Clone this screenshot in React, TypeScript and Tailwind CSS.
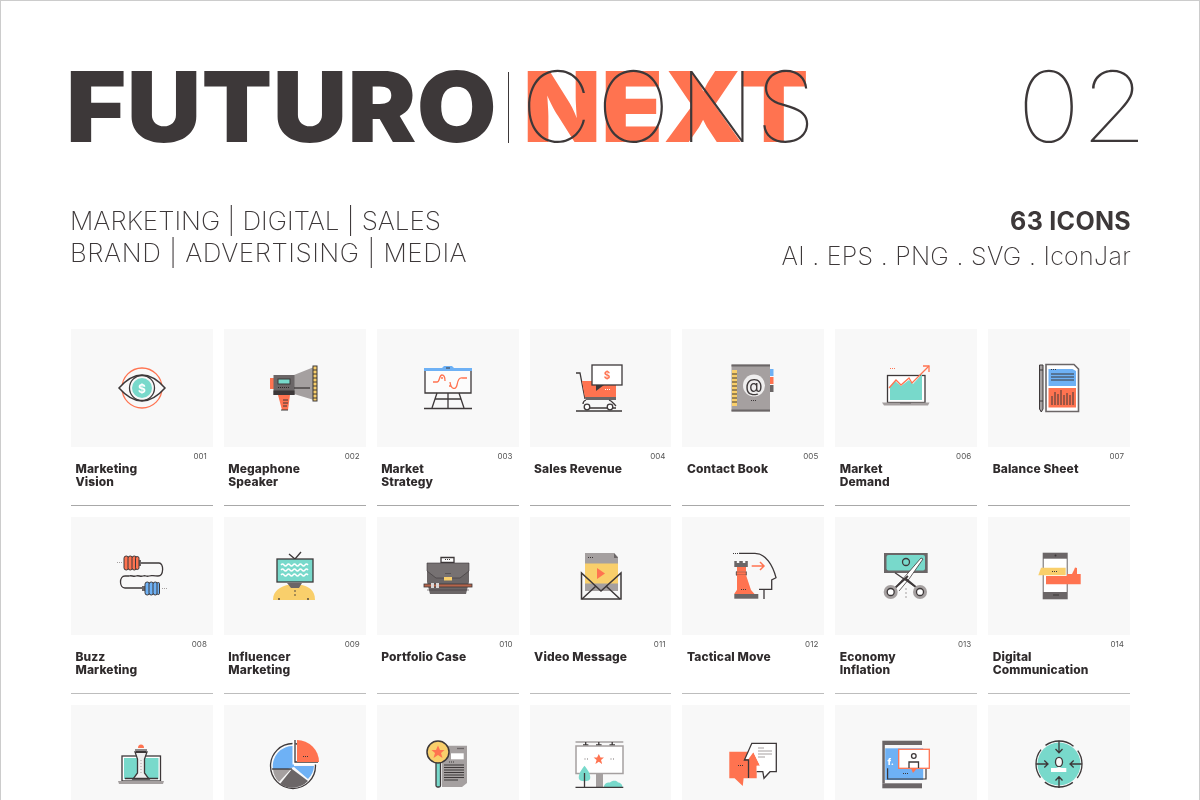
import React from "react";

const D = "#3d3839", O = "#ff7350", T = "#78d9cb", B = "#6eb1f5", Y = "#f9cf6b", G = "#a5a0a0", M = "#6b6667", W = "#ffffff";

const Dots = ({ x, y, c = D }: { x: number; y: number; c?: string }) => (
  <g fill={c}>
    <rect x={x} y={y} width="1" height="1" />
    <rect x={x + 2} y={y} width="1" height="1" />
    <rect x={x + 4} y={y} width="1" height="1" />
  </g>
);

const S = ({ children }: { children: React.ReactNode }) => (
  <svg width="64" height="64" viewBox="0 0 64 64" fill="none" stroke="none" strokeWidth="1.3">
    {children}
  </svg>
);

const icons: React.ReactNode[] = [
  // 1 eye
  <S key="1">
    <circle cx="32" cy="32" r="20" stroke={O} />
    <path d="M9 32Q32 6 55 32Q32 58 9 32Z" stroke={D} strokeWidth="1.5" fill="#f8f8f8" />
    <circle cx="32" cy="32" r="12.5" stroke={D} />
    <circle cx="32" cy="32" r="10" fill={T} />
    <text x="32" y="36.5" textAnchor="middle" fontSize="12" fontWeight="700" fontFamily="Inter, sans-serif" fill={W}>$</text>
  </S>,
  // 2 megaphone
  <S key="2">
    <rect x="7" y="22" width="4" height="11" fill={O} />
    <path d="M15 39h12l-2 15h-6z" fill={O} />
    <path d="M20 44h5M20 47h5M20 50h4M18 54h7" stroke={D} strokeWidth="1" />
    <path d="M31 19L51 11V44L31 38Z" fill={G} />
    <rect x="10.5" y="19" width="21" height="20" fill={M} />
    <rect x="10.5" y="34.5" width="21" height="4.5" fill={D} />
    <rect x="15" y="23" width="12" height="5" fill={T} stroke={D} strokeWidth="1" />
    <Dots x={15} y={31} c="#2c2829" />
    <Dots x={21} y={31} c="#2c2829" />
    <path d="M31 32H47" stroke={D} />
    <rect x="50" y="10" width="4" height="35" fill={Y} stroke={D} strokeWidth="1" />
    <path d="M50 14h4M50 18h4M50 22h4M50 26h4M50 30h4M50 34h4M50 38h4M50 42h4" stroke={D} strokeWidth="1" />
  </S>,
  // 3 strategy
  <S key="3">
    <path d="M26 12l2-2h8l2 2z" fill={B} />
    <rect x="8" y="12" width="48" height="3" fill={B} />
    <rect x="30" y="11.5" width="4" height="1" fill={D} />
    <path d="M9 15V37H55V15" stroke={D} fill="#fcfcfc" />
    <path d="M17 26h4c3 0 2-7 5-7s3 3 3 6" stroke={O} />
    <path d="M34 26c1 8 6 8 7 3s2-8 6-7h4" stroke={O} />
    <circle cx="26" cy="22" r="1" fill={O} />
    <circle cx="34" cy="30" r="1" fill={O} />
    <path d="M21 37L16 52M43 37L48 52M32 37V52M19 43H45" stroke={D} />
    <path d="M8 52.5H56" stroke={D} />
  </S>,
  // 4 cart
  <S key="4">
    <path d="M8 17h4l5 26" stroke={D} />
    <path d="M14 25h34v17H17z" fill={O} />
    <path d="M17 41h31v3H18z" fill={M} />
    <rect x="24" y="9" width="30" height="20" fill={W} stroke={D} />
    <path d="M28 29h8l-8 6z" fill={D} />
    <text x="39" y="22.5" textAnchor="middle" fontSize="10" fontWeight="700" fontFamily="Inter, sans-serif" fill={O}>$</text>
    <Dots x={37} y={33} c={W} />
    <path d="M18 44c-3 1-3 4-3 4M19 52H48M41 44c3 1 4 3 7 6" stroke={D} />
    <circle cx="19" cy="51" r="2.8" fill={W} stroke={D} />
    <circle cx="42" cy="51" r="2.8" fill={W} stroke={D} />
    <path d="M8 55H54" stroke={D} />
  </S>,
  // 5 contact book
  <S key="5">
    <rect x="49" y="13" width="3.5" height="7" fill={B} />
    <rect x="49" y="21" width="3.5" height="7" fill={O} />
    <rect x="49" y="29" width="3.5" height="7" fill={M} />
    <rect x="10.5" y="8.5" width="38.5" height="47" fill={G} />
    <path d="M10.5 9.5H49M10.5 54.5H49" stroke={M} strokeWidth="2" />
    <rect x="11" y="14" width="5" height="36" fill={Y} />
    <path d="M11 18h5M11 22h5M11 26h5M11 30h5M11 34h5M11 38h5M11 42h5M11 46h5" stroke={D} strokeWidth="1" />
    <circle cx="33" cy="29.5" r="11" fill="#efeeee" />
    <text x="33" y="36" textAnchor="middle" fontSize="18" fontWeight="400" fontFamily="Inter, sans-serif" fill={D}>@</text>
    <Dots x={30} y={44} />
  </S>,
  // 6 laptop demand
  <S key="6">
    <rect x="13.5" y="19.5" width="37.5" height="27" fill={W} stroke={D} />
    <path d="M16 44V31L21 25L27 30L35 24L39 28L48 18V44Z" fill={T} />
    <path d="M15 32L22 24L27 29L35 22L38 27L55 10" stroke={O} />
    <path d="M49 10H55V16" stroke={O} />
    <Dots x={16} y={12} c={O} />
    <path d="M8 46.5H55.5L54 49.5H10Z" fill={G} />
    <rect x="26" y="46" width="11" height="1.5" fill={M} />
  </S>,
  // 7 balance sheet
  <S key="7">
    <path d="M12.5 9h3.5v44l-1.7 3-1.8-3z" fill={G} stroke={D} strokeWidth="1" />
    <path d="M12.5 14h3.5M12.5 45h3.5" stroke={D} strokeWidth="1" />
    <path d="M19 8.5H47L51.5 13V55.5H19Z" stroke={M} strokeWidth="1.6" fill={W} />
    <path d="M21.5 13H45.5L49 15V30H21.5Z" fill={B} />
    <rect x="21.5" y="32" width="27.5" height="19.5" fill={O} />
    <Dots x={24} y={13} />
    <path d="M24 18H47M24 21H47M24 24H47" stroke={D} strokeWidth="1" />
    <path d="M25 49V40M28 49V36M31 49V38M34 49V34M37 49V39M40 49V37M43 49V39M46 49V36" stroke={D} strokeWidth="1" />
  </S>,
  // 8 buzz
  <S key="8">
    <path d="M31 19H49C54 19 54 32 48 32C42 32 42 31 39 32C36 33 36 31 33 32C30 33 29 31 26 32C23 33 22 31 19 32H15C9 32 9 44 15 44H32" stroke={D} />
    <path d="M27 16h4v6h-4z" fill={M} />
    <g fill={O} stroke={D} strokeWidth="1">
      <rect x="14" y="12" width="4.5" height="14" rx="2.2" />
      <rect x="18" y="12" width="4.5" height="14" rx="2.2" />
      <rect x="22" y="12" width="4.5" height="14" rx="2.2" />
      <rect x="25.5" y="12.5" width="3.5" height="13" rx="1.7" />
    </g>
    <path d="M32 42h4v5h-4z" fill={M} />
    <g fill={B} stroke={D} strokeWidth="1">
      <rect x="35" y="38" width="4.5" height="13" rx="2.2" />
      <rect x="39" y="38" width="4.5" height="13" rx="2.2" />
      <rect x="43" y="38" width="4.5" height="13" rx="2.2" />
      <rect x="47" y="38.5" width="2.5" height="12" rx="1.2" />
    </g>
    <Dots x={7} y={18} c={G} />
    <Dots x={52} y={44} c={G} />
  </S>,
  // 9 influencer
  <S key="9">
    <path d="M10 56C10 46 18 43 24 41H39C46 43 52 46 52 56Z" fill={Y} />
    <path d="M24 39H39L36 44H28Z" fill={M} />
    <path d="M16 54V56M45 54V56" stroke={D} />
    <circle cx="32" cy="47" r=".8" fill={D} />
    <circle cx="32" cy="51" r=".8" fill={D} />
    <path d="M26 10L32 15L38 8" stroke={D} />
    <rect x="14" y="15" width="36" height="23" fill={T} stroke={D} />
    <path d="M18 21q1.5-2 3 0t3 0 3 0 3 0 3 0 3 0 3 0 3 0 3 0M18 26q1.5-2 3 0t3 0 3 0 3 0 3 0 3 0 3 0 3 0 3 0M18 31q1.5-2 3 0t3 0 3 0 3 0 3 0 3 0 3 0 3 0 3 0" stroke={W} />
  </S>,
  // 10 portfolio
  <S key="10">
    <path d="M25 13.5h13v5H25z" fill={W} stroke={D} />
    <Dots x={29} y={15} />
    <path d="M11 19H53V38L50 50H14L11 38Z" fill={M} />
    <path d="M11 19H53V27L44 34H20L11 27Z" fill="#767172" stroke={D} strokeWidth=".6" />
    <rect x="28" y="33" width="8" height="3.5" fill={Y} />
    <Dots x={29.5} y={29} />
    <rect x="8" y="40" width="48" height="3" fill="#b5654b" stroke={D} strokeWidth=".8" />
    <path d="M15 39h3v5h-3zM20 39h3v5h-3z" fill="#d8d5d5" />
    <path d="M11 46H53" stroke={D} strokeWidth=".6" />
  </S>,
  // 11 video message
  <S key="11">
    <path d="M17 9H46L50 13V47H17Z" fill={G} />
    <rect x="17" y="19.5" width="33" height="20" fill={Y} />
    <path d="M46 9V14H50Z" fill={M} />
    <Dots x={20} y={13} />
    <path d="M29 24L37 29.5L29 35Z" fill={O} />
    <path d="M13.5 29V55H53V29L33 47Z" stroke={D} strokeWidth="1.5" />
    <path d="M14 55L28 42M52 55L38 42" stroke={D} strokeWidth="1.5" />
  </S>,
  // 12 tactical
  <S key="12">
    <path d="M18 9.3H34C45 9.3 52 22 55 33.7L50.7 36V45.3H38M43 45.3V55" stroke={D} />
    <Dots x={12} y={9} />
    <path d="M13.3 23V17h2.5v2h2.5v-2h3.5v2h2.5v-2h2.5v6z" fill={M} />
    <path d="M15.3 27.7h10v3.5h-10z" fill={O} stroke={D} strokeWidth=".8" />
    <path d="M16 31h9l5 15 3.5 4H13.5l-.2-.2 2.7-4z" fill={O} />
    <path d="M16 23h9v4.7h-9z" fill={O} />
    <Dots x={20} y={45} />
    <rect x="13.3" y="50" width="24" height="4.7" fill={M} />
    <path d="M30.7 22H43M39 18L43 22L39 26" stroke={O} strokeWidth="1.5" />
  </S>,
  // 13 economy
  <S key="13">
    <path d="M10 9H53.7V29H10Z" fill={M} />
    <rect x="12.5" y="11" width="38.5" height="15.5" rx="2" fill={T} />
    <circle cx="32" cy="18" r="3.5" stroke={D} />
    <path d="M21 44L47 14L49 15L35 35L25 47" fill={W} stroke={D} strokeWidth=".8" />
    <path d="M43 44L21 28.7" stroke={D} strokeWidth="1.2" />
    <path d="M21 44L34 32M43 44L31 34" stroke={D} strokeWidth="1.8" />
    <circle cx="16.7" cy="48" r="7" fill={G} />
    <circle cx="16.7" cy="48" r="3.5" fill={W} stroke={D} />
    <circle cx="46" cy="48" r="7" fill={G} />
    <circle cx="46" cy="48" r="3.5" fill={W} stroke={D} />
    <path d="M32 44V46M32 48V50M32 52V54" stroke={G} strokeWidth="1" />
  </S>,
  // 14 digital
  <S key="14">
    <rect x="15.7" y="8.7" width="25" height="46.6" fill={M} />
    <rect x="16.7" y="14.7" width="23" height="33.3" fill={W} />
    <rect x="26" y="50.5" width="6" height="1" fill={D} />
    <circle cx="28.5" cy="11.5" r="1" fill={D} />
    <path d="M19 32H40V30H45L47 26L48 23.5L50 24V30H53.7V40.3H19Z" fill={O} />
    <path d="M11.3 31.3L14 23.7H38.7V31.3Z" fill={Y} />
    <Dots x={25} y={27} />
  </S>,
  // 15 tube on laptop
  <S key="15">
    <rect x="12" y="24" width="38.5" height="25" fill={W} stroke={D} />
    <rect x="14" y="26" width="34.5" height="21" fill={T} />
    <path d="M8 49H54L53 52H9Z" fill={G} />
    <path d="M25 20H37L34.5 27V41L39 47H23L27.5 41V27Z" fill="#efeeee" stroke={D} />
    <path d="M26 20H36" stroke={D} strokeWidth="2" />
    <path d="M25 18H37" stroke={M} strokeWidth="1.5" />
    <path d="M28 16a3 3.5 0 0 1 6 0z" fill={O} />
    <path d="M31 28V42" stroke={G} strokeWidth="1" strokeDasharray="1 2" />
    <path d="M15 46.5H48" stroke={D} />
  </S>,
  // 16 pie
  <S key="16">
    <circle cx="30" cy="34" r="22.5" stroke={D} />
    <path d="M31 13V34H51A20 20 0 0 1 45 47L31 35L16 40L10 37A20 20 0 0 1 31 14Z" fill={B} />
    <path d="M10 37H28L16 50A20 20 0 0 1 10 37Z" fill={G} />
    <path d="M29 37L45 49A22 22 0 0 1 17 52Z" fill={M} />
    <path d="M9 37H29" stroke={D} />
    <path d="M31 8V31H55" stroke={W} strokeWidth="3" />
    <path d="M32 8V30H55" stroke={D} strokeWidth="1.3" />
    <path d="M34 8A22 22 0 0 1 56 30H34Z" fill={O} />
    <Dots x={40} y={24} />
  </S>,
  // 17 search document
  <S key="17">
    <path d="M26 13.7H51V51L46 55H26Z" fill={G} />
    <rect x="35" y="21.3" width="12.7" height="6" fill={W} />
    <path d="M41 16.5H48" stroke={M} />
    <Dots x={33} y={29.5} />
    <path d="M28 33H48M28 35.5H48M28 38H48M28 40.5H48M28 43H48M28 45.5H48M28 48H42" stroke={D} strokeWidth="1.1" />
    <rect x="20" y="30" width="4.5" height="25" rx="1.5" fill={T} stroke={D} />
    <circle cx="22" cy="20" r="11" fill={Y} stroke={D} strokeWidth="1.5" />
    <path d="M22 13.5L24 18H28.5L25 21L26.5 26L22 23L17.5 26L19 21L15.5 18H20Z" fill={O} />
  </S>,
  // 18 billboard
  <S key="18">
    <path d="M7.5 10H55.3" stroke={G} strokeWidth="1.5" />
    <path d="M17.7 10V13M30.8 10V13M44.2 10V13" stroke={D} />
    <path d="M15 13H20.4M28 13H33.6M41.5 13H47" stroke={D} />
    <rect x="8" y="14" width="47" height="27.5" fill={W} stroke={G} strokeWidth="1.5" />
    <path d="M30.8 22L32.5 25.5H36L33 28L34.2 32L30.8 29.8L27.4 32L28.6 28L25.6 25.5H29.1Z" fill={O} />
    <path d="M16.5 27H17.5M19 27H20M42.5 27H43.5M45 27H46" stroke={G} />
    <rect x="28" y="41.5" width="7" height="13.5" fill={G} />
    <path d="M16.5 33.7C12 39 10 44 11 47C12 50 21 50 22 47C23 44 21 39 16.5 33.7Z" fill={T} />
    <path d="M16.5 41V55" stroke={D} />
    <path d="M36 55C36 51 40 50 42 50.5C44 48 49 48 50 50.5C52 50.5 54.4 52 54.4 55Z" fill={T} />
    <path d="M7.5 55.3H55.3" stroke={D} />
  </S>,
  // 19 chat
  <S key="19">
    <path d="M8.3 19.7H27.5L32.4 20.3L39 33.7H35.7V46.3H22.6L21.8 54L13.6 46.3H8.3Z" fill={O} />
    <path d="M30.8 11.3H55.3V39.7H49L43 46.3L41.8 39.7H35.7V33.7H39L32.4 20.3L27.5 27H24Z" fill={W} />
    <path d="M35.7 39.7H41.8L43 46.3L49 39.7H55.3V11.3H30.8L23.4 28H27.5V46" stroke={D} />
    <path d="M37 16H43M37 19H51M37 22H51M37 25H44" stroke={G} strokeWidth="1.2" />
    <Dots x={17} y={33} />
  </S>,
  // 20 social
  <S key="20">
    <rect x="8.3" y="8.7" width="39.7" height="4.3" fill={M} />
    <rect x="8.3" y="51.3" width="39.7" height="5" fill={M} />
    <rect x="8.3" y="13" width="2.5" height="38.3" fill={M} />
    <rect x="11.2" y="16.3" width="38" height="31.7" fill={B} />
    <text x="13.5" y="33" fontSize="9" fontWeight="800" fontFamily="Inter, sans-serif" fill={W}>f.</text>
    <path d="M13.6 36.3V47H52V36.3" stroke={D} strokeWidth="1.2" />
    <rect x="24.7" y="17.3" width="30.6" height="19" fill={W} stroke={O} />
    <circle cx="39.8" cy="24" r="2.3" stroke={D} />
    <path d="M35 36V30H44.5V36" stroke={D} />
    <path d="M37 36.3H43L39 41Z" fill={O} />
    <Dots x={29} y={41} />
  </S>,
  // 21 target
  <S key="21">
    <circle cx="32" cy="32" r="21.5" fill={T} />
    <circle cx="32" cy="32" r="23" stroke={D} strokeDasharray="30 6.1" strokeDashoffset="15" />
    <ellipse cx="32" cy="30" rx="3.5" ry="4.7" fill="#f8f8f8" stroke={D} />
    <path d="M24 40V36H29L32 35L35 36H39.3V40Z" fill={W} />
    <path d="M32 8.7V20.7M28.5 17L32 20.7L35.5 17M32 44.7V56M28.5 48.5L32 44.7L35.5 48.5M9 32H21M17.3 28.5L21 32L17.3 35.5M43 32H55M46.7 28.5L43 32L46.7 35.5" stroke={D} />
  </S>,
];

const items: [string, string, string?][] = [
  ["001", "Marketing", "Vision"], ["002", "Megaphone", "Speaker"], ["003", "Market", "Strategy"], ["004", "Sales Revenue"],
  ["005", "Contact Book"], ["006", "Market", "Demand"], ["007", "Balance Sheet"],
  ["008", "Buzz", "Marketing"], ["009", "Influencer", "Marketing"], ["010", "Portfolio Case"], ["011", "Video Message"],
  ["012", "Tactical Move"], ["013", "Economy", "Inflation"], ["014", "Digital", "Communication"],
];

export default function App() {
  return (
    <div className="h-[800px] overflow-hidden bg-white border-x border-t border-[#cccccc] text-[#3d3839] font-['Inter',sans-serif] will-change-transform">
      <div className="pl-[70px] pr-[60px] pt-[70px]">
        <div className="flex h-[72px] items-center">
          <div className="-ml-[5px] w-[443px] origin-left scale-x-[1.052] text-[98px] leading-[72px] font-black tracking-[0.4px] whitespace-nowrap">FUTURO</div>
          <div className="-ml-[1px] w-px h-[71px] bg-[#3d3839]" />
          <div className="relative ml-[11px] w-[282px] h-[72px]">
            <div className="ml-[3px] origin-left scale-x-[1.035] text-[98px] leading-[72px] font-black text-[#ff7350] whitespace-nowrap">NEXT</div>
            <div className="absolute left-0 top-0 text-[98px] leading-[72px] font-thin tracking-[3px] whitespace-nowrap">
              <span className="ml-[1px]">C</span>
              <span className="ml-[2px]">O</span>
              <span className="ml-[6px]">N</span>
              <span className="-ml-[2px]">S</span>
            </div>
          </div>
          <div className="ml-auto -mr-[9px] origin-right scale-x-[1.1] text-[98px] leading-[72px] font-thin whitespace-nowrap">02</div>
        </div>
        <div className="mt-[62px] flex justify-between">
          <div className="-ml-[1px] text-[26px] leading-[32px] font-extralight whitespace-nowrap">
            <div>MARKETING | DIGITAL | SALES</div>
            <div className="tracking-[0.55px]">BRAND | ADVERTISING | MEDIA</div>
          </div>
          <div className="text-right pr-[8px]">
            <div className="text-[25px] leading-[32px] font-bold tracking-[0.3px]">63 ICONS</div>
            <div className="text-[25px] leading-[38px] font-extralight tracking-[0.3px] whitespace-nowrap">AI . EPS . PNG . SVG . IconJar</div>
          </div>
        </div>
      </div>
      <div className="mt-[54px] ml-[70px] w-[1059px] grid grid-cols-7 gap-x-[11px] gap-y-[11px]">
        {icons.map((icon, i) => {
          const it = items[i];
          if (!it) {
            return (
              <div key={i} className="h-[118px] bg-[#f8f8f8] flex items-center justify-center">{icon}</div>
            );
          }
          const [num, a, b] = it;
          return (
            <div key={num} className={i < 7 ? "h-[177px] border-b border-[#a8a8a8]" : "h-[177px] border-b border-[#bdbdbd]"}>
              <div className="h-[118px] bg-[#f8f8f8] flex items-center justify-center">{icon}</div>
              <div className="text-right pr-[6px] pt-[5px] text-[8px] leading-[9px] text-[#555555]">{num}</div>
              <div className="pl-[4.5px] pt-[1px] text-[12px] leading-[13px] font-extrabold tracking-[0.1px] text-[#2f2b2c]">
                <div>{a}</div>
                {b && <div>{b}</div>}
              </div>
            </div>
          );
        })}
      </div>
    </div>
  );
}
